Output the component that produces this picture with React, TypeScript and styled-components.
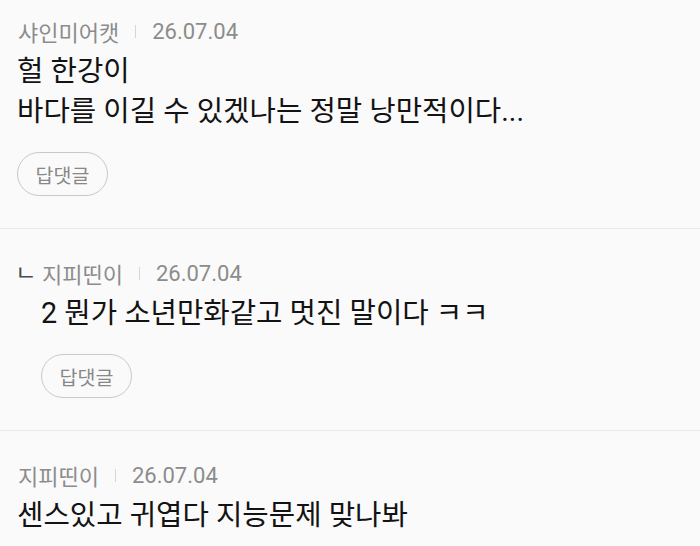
import * as React from "react";
import styled, { createGlobalStyle } from "styled-components";

type Comment = {
  id: number;
  author: string;
  date: string;
  lines: string[];
  reply?: boolean;
  canReply?: boolean;
};

const comments: Comment[] = [
  {
    id: 1,
    author: "샤인미어캣",
    date: "26.07.04",
    lines: ["헐 한강이", "바다를 이길 수 있겠나는 정말 낭만적이다..."],
    canReply: true,
  },
  {
    id: 2,
    author: "지피띤이",
    date: "26.07.04",
    lines: ["2 뭔가 소년만화같고 멋진 말이다 ㅋㅋ"],
    reply: true,
    canReply: true,
  },
  {
    id: 3,
    author: "지피띤이",
    date: "26.07.04",
    lines: ["센스있고 귀엽다 지능문제 맞나봐"],
  },
];

const GlobalStyle = createGlobalStyle`
  html, body {
    margin: 0;
    padding: 0;
    background: #fafafa;
  }
  body {
    font-family: Roboto, "Noto Sans CJK KR", sans-serif;
    -webkit-font-smoothing: antialiased;
  }
`;

const App: React.FC = () => (
  <>
    <GlobalStyle />
    <List>
      {comments.map(c => (
        <Item key={c.id} $reply={c.reply}>
          <div>{c.reply && <ReplyMark>ㄴ</ReplyMark>}</div>
          <Content>
            <Meta>
              <Author>{c.author}</Author>
              <Divider />
              <DateText>{c.date}</DateText>
            </Meta>
            <Body>
              {c.lines.map((line, i) => (
                <div key={i}>{line}</div>
              ))}
            </Body>
            {c.canReply && <ReplyButton type="button">답댓글</ReplyButton>}
          </Content>
        </Item>
      ))}
    </List>
  </>
);

const List = styled.ul`
  list-style: none;
  margin: 0;
  padding: 0;
  width: 700px;
`;

const Item = styled.li<{ $reply?: boolean }>`
  display: grid;
  grid-template-columns: ${p => (p.$reply ? "24px" : "0")} 1fr;
  padding: 31px 17px 32px;
  border-bottom: 1px solid #e9e9e9;

  &:first-child {
    padding-top: 18px;
  }
`;

// the little ㄴ in front of a reply
const ReplyMark = styled.span`
  display: inline-block;
  font-size: 21px;
  line-height: 26px;
  color: #4a4a4a;
  transform: scaleX(1.12);
  transform-origin: left center;
  margin-left: -2px;
`;

const Content = styled.div`
  display: flex;
  flex-direction: column;
  align-items: flex-start;
`;

const Meta = styled.div`
  display: flex;
  align-items: center;
  height: 26px;
  font-size: 22px;
  color: #8c8c8c;
`;

const Author = styled.span`
  margin-left: 1px;
`;

const Divider = styled.span`
  width: 1px;
  height: 13px;
  background: #d6d6d6;
  margin: 0 16px;
`;

const DateText = styled.span`
  font-size: 22px;
`;

const Body = styled.div`
  margin-top: 7px;
  font-size: 28.7px;
  line-height: 40px;
  color: #131313;
`;

const ReplyButton = styled.button`
  margin-top: 21px;
  width: 91px;
  height: 44px;
  border: 1.5px solid #c9c9c9;
  border-radius: 22px;
  background: transparent;
  font-family: inherit;
  font-size: 19.5px;
  color: #888;
  padding: 0;
`;

export default App;
